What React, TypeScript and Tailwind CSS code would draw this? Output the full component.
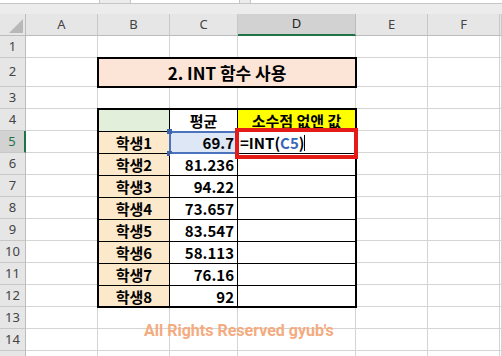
import { ReactNode } from "react";

const cols = ["A", "B", "C", "D", "E", "F", ""];
const rowCount = 15;

const students = [
  { name: "학생1", avg: "69.7" },
  { name: "학생2", avg: "81.236" },
  { name: "학생3", avg: "94.22" },
  { name: "학생4", avg: "73.657" },
  { name: "학생5", avg: "83.547" },
  { name: "학생6", avg: "58.113" },
  { name: "학생7", avg: "76.16" },
  { name: "학생8", avg: "92" },
];

// grid row index r: 0 = column headers, 1..15 = sheet rows; col c: 0 = row headers, 1.. = A..
function covered(r: number, c: number) {
  if (r === 2 && c >= 2 && c <= 4) return true; // title B2:D2
  if (r >= 4 && r <= 12 && c >= 2 && c <= 4) return true; // table B4:D12
  return false;
}

function SheetCell({ r, c }: { r: number; c: number }) {
  if (r === 0 && c === 0) {
    return (
      <div className="relative bg-[#e6e6e6] border-r border-b border-[#bcbcbc]">
        <svg className="absolute left-0 top-0" width="26" height="22">
          <polygon points="23,5 23,19 9,19" fill="#b8b8b8" />
        </svg>
      </div>
    );
  }
  if (r === 0) {
    const active = c === 4;
    return (
      <div
        className={
          active
            ? "flex items-center justify-center bg-[#d2d2d2] border-r border-[#bcbcbc] border-b-2 border-b-[#217346] text-[13px] text-[#222]"
            : "flex items-center justify-center bg-[#e6e6e6] border-r border-b border-[#c8c8c8] border-b-[#bcbcbc] text-[13px] text-[#444]"
        }
      >
        {cols[c - 1]}
      </div>
    );
  }
  if (c === 0) {
    const active = r === 5;
    return (
      <div
        className={
          active
            ? "flex items-center justify-center bg-[#d2d2d2] border-b border-[#c8c8c8] border-r-2 border-r-[#217346] text-[13px] text-[#217346]"
            : "flex items-center justify-center bg-[#e6e6e6] border-b border-[#c8c8c8] border-r border-r-[#bcbcbc] text-[13px] text-[#444]"
        }
      >
        {r < rowCount ? r : ""}
      </div>
    );
  }
  return <div className="bg-white border-r border-b border-[#d4d4d4]" />;
}

function TableRow({ name, avg, first, last }: { name: string; avg: string; first: boolean; last: boolean }) {
  const b = last ? "" : "border-b";
  return (
    <>
      <div className={`flex items-center justify-center bg-[#fce9cb] border-r ${b} border-black`}>{name}</div>
      <div
        className={`relative flex items-center justify-end pr-[3px] border-r ${b} border-black ${
          first ? "bg-[#dde7f5]" : "bg-white"
        }`}
      >
        {first && (
          <>
            <div className="absolute -inset-px border-2 border-[#4a72bd]" />
            <div className="absolute -left-[3px] -top-[3px] w-[5px] h-[5px] bg-[#3d63a8]" />
            <div className="absolute -left-[3px] -bottom-[3px] w-[5px] h-[5px] bg-[#3d63a8]" />
          </>
        )}
        <span className="relative">{avg}</span>
      </div>
      <div className={`relative flex items-center pl-[2px] bg-white ${b} border-black`}>
        {first && (
          <>
            <span>
              =INT(<span className="text-[#3a66b8]">C5</span>)
            </span>
            <span className="inline-block w-px h-[16px] bg-black" />
            <div className="absolute z-10 -left-[3px] -top-[4px] -right-[3px] -bottom-[6px] border-4 border-[#e41b17]" />
          </>
        )}
      </div>
    </>
  );
}

export default function App() {
  const cells: ReactNode[] = [];
  for (let r = 0; r <= rowCount; r++) {
    for (let c = 0; c < 8; c++) {
      if (covered(r, c)) continue;
      cells.push(<SheetCell key={`${r}-${c}`} r={r} c={c} />);
    }
  }

  return (
    <div className="relative w-[502px] h-[356px] overflow-hidden bg-white font-['Noto_Sans',sans-serif]">
      {/* formula bar edge */}
      <div className="h-[14px] bg-[#ececec] flex flex-col">
        <div className="h-[4px] flex border-b border-[#c6c6c6]">
          <div className="w-[100px] bg-white border-r border-[#c6c6c6]" />
          <div className="w-[30px]" />
          <div className="w-[110px] bg-white border-x border-[#c6c6c6]" />
          <div className="w-[10px]" />
          <div className="flex-1 bg-white border-l border-[#c6c6c6]" />
        </div>
      </div>

      {/* sheet */}
      <div className="grid grid-cols-[26px_72px_72px_68px_118px_72px_72px_1fr] grid-rows-[22px_22px_29px_22px_22px_22px_22px_22px_22px_22px_22px_22px_22px_22px_22px_22px]">
        <div className="relative z-[1] col-start-3 col-end-6 row-start-3 row-end-4 -m-px border-2 border-black bg-[#fce4d6] flex items-center justify-center font-['Noto_Sans_CJK_KR',sans-serif] font-bold text-[17px] text-black">
          2. INT 함수 사용
        </div>

        <div className="relative z-[1] col-start-3 col-end-6 row-start-5 row-end-14 -m-px border-2 border-black bg-white grid grid-cols-[71px_68px_1fr] grid-rows-[22px_22px_22px_22px_22px_22px_22px_22px_1fr] font-['Noto_Sans_CJK_KR',sans-serif] font-bold text-[15px] text-black leading-none">
          <div className="bg-[#e2efda] border-r border-b border-black" />
          <div className="flex items-center justify-center border-r border-b border-black">평균</div>
          <div className="flex items-center justify-center bg-[#ffff00] border-b border-black">소수점 없앤 값</div>
          {students.map((s, i) => (
            <TableRow key={s.name} name={s.name} avg={s.avg} first={i === 0} last={i === students.length - 1} />
          ))}
        </div>

        {cells}
      </div>

      <div className="absolute left-[144px] top-[323px] font-['Roboto',sans-serif] font-bold text-[16px] leading-none text-[#f4ab80] whitespace-nowrap">
        All Rights Reserved gyub's
      </div>
    </div>
  );
}
